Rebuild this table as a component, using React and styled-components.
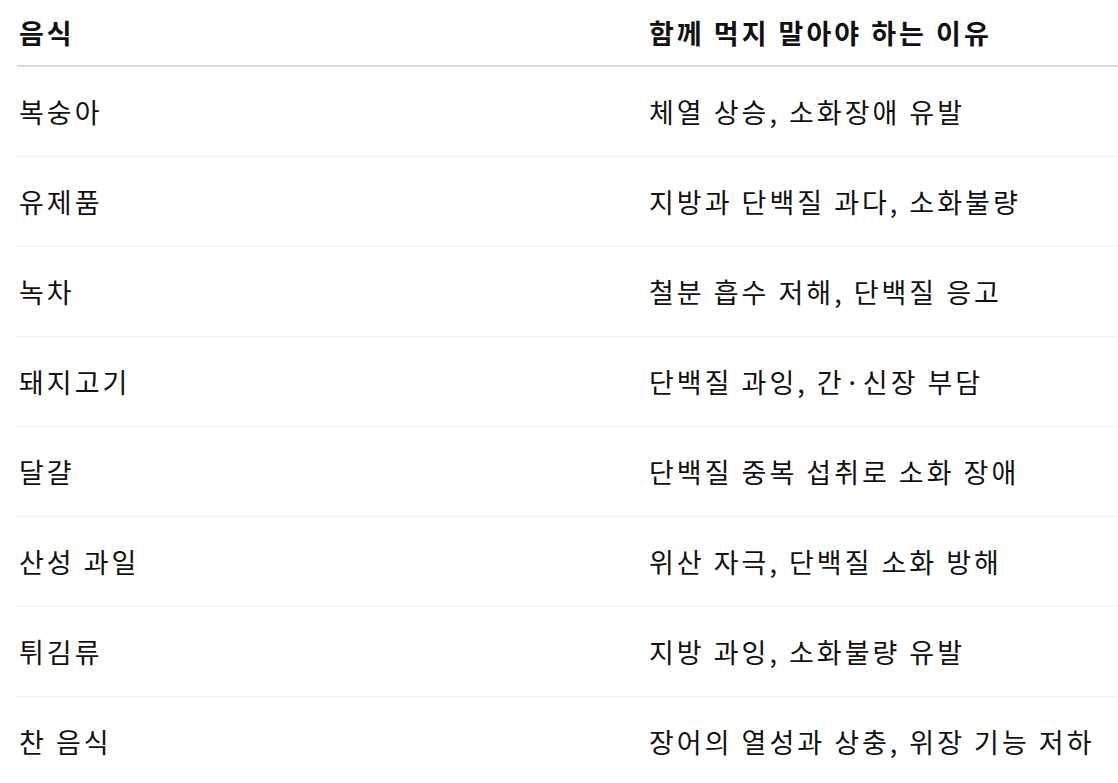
import React from 'react';
import styled, { createGlobalStyle } from 'styled-components';

const GlobalStyle = createGlobalStyle`
  body {
    margin: 0;
    background: #ffffff;
    font-family: "Noto Sans CJK KR", "Noto Sans", sans-serif;
    color: #111111;
    overflow: hidden;
  }
`;

const Wrapper = styled.div`
  padding-left: 17px;
`;

const Table = styled.table`
  width: 1101px;
  border-collapse: collapse;
  table-layout: fixed;
`;

const HeadCell = styled.th`
  height: 65px;
  padding: 0 2px;
  text-align: left;
  vertical-align: middle;
  font-size: 27px;
  letter-spacing: 3px;
  font-weight: 700;
  border-bottom: 2px solid #dadada;
  width: ${props => props.$width || 'auto'};
`;

const Row = styled.tr`
  border-bottom: 1px solid #f0f0f0;
  &:last-child {
    border-bottom: none;
  }
`;

const Cell = styled.td`
  height: 89px;
  padding: 0 2px;
  vertical-align: middle;
  font-size: 27px;
  letter-spacing: 3px;
  font-weight: 400;
  white-space: nowrap;
`;

const rows = [
  ['복숭아', '체열 상승, 소화장애 유발'],
  ['유제품', '지방과 단백질 과다, 소화불량'],
  ['녹차', '철분 흡수 저해, 단백질 응고'],
  ['돼지고기', '단백질 과잉, 간·신장 부담'],
  ['달걀', '단백질 중복 섭취로 소화 장애'],
  ['산성 과일', '위산 자극, 단백질 소화 방해'],
  ['튀김류', '지방 과잉, 소화불량 유발'],
  ['찬 음식', '장어의 열성과 상충, 위장 기능 저하'],
];

export default function App() {
  return (
    <>
      <GlobalStyle />
      <Wrapper>
        <Table>
          <thead>
            <tr>
              <HeadCell $width="626px">음식</HeadCell>
              <HeadCell>함께 먹지 말아야 하는 이유</HeadCell>
            </tr>
          </thead>
          <tbody>
            {rows.map(([food, reason]) => (
              <Row key={food}>
                <Cell>{food}</Cell>
                <Cell>{reason}</Cell>
              </Row>
            ))}
          </tbody>
        </Table>
      </Wrapper>
    </>
  );
}
